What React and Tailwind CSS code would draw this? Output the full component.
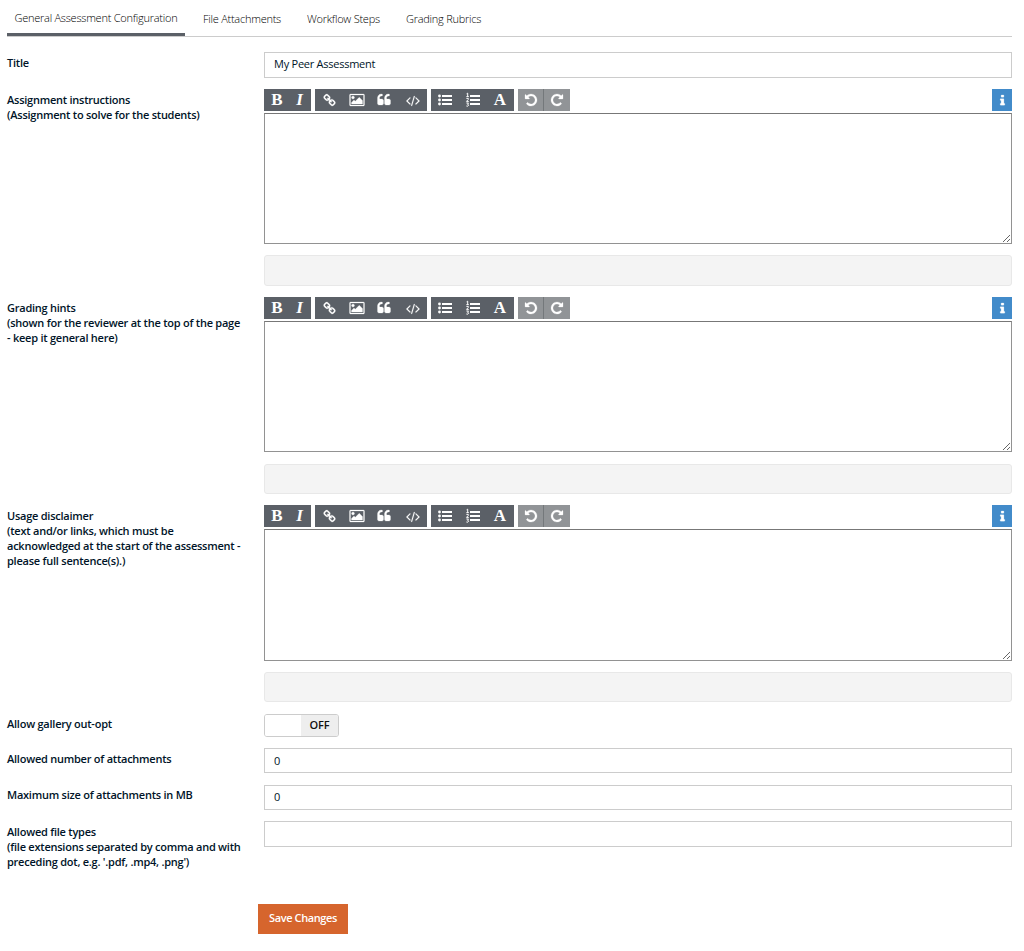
import React from "react";

const LINK =
  "M1520 1216q0-40-28-68l-208-208q-28-28-68-28-42 0-72 32 3 3 19 18.5t21.5 21.5 15 19 13 25.5 3.5 27.5q0 40-28 68t-68 28q-15 0-27.5-3.5t-25.5-13-19-15-21.5-21.5-18.5-19q-33 31-33 73 0 40 28 68l206 207q27 27 68 27 40 0 68-26l147-146q28-28 28-67zm-703-705q0-40-28-68l-206-207q-28-28-68-28-39 0-68 27l-147 146q-28 28-28 67 0 40 28 68l208 208q27 27 68 27 42 0 72-31-3-3-19-18.5t-21.5-21.5-15-19-13-25.5-3.5-27.5q0-40 28-68t68-28q15 0 27.5 3.5t25.5 13 19 15 21.5 21.5 18.5 19q33-31 33-73zm895 705q0 120-85 203l-147 146q-83 83-203 83-121 0-204-85l-206-207q-83-83-83-203 0-123 88-209l-88-88q-86 88-208 88-120 0-204-84l-208-208q-84-84-84-204t85-203l147-146q83-83 203-83 121 0 204 85l206 207q83 83 83 203 0 123-88 209l88 88q86-88 208-88 120 0 204 84l208 208q84 84 84 204z";
const PICTURE =
  "M576 576q0 80-56 136t-136 56-136-56-56-136 56-136 136-56 136 56 56 136zm1024 384v448h-1408v-192l320-320 160 160 512-512zm96-704h-1600q-13 0-22.5 9.5t-9.5 22.5v1216q0 13 9.5 22.5t22.5 9.5h1600q13 0 22.5-9.5t9.5-22.5v-1216q0-13-9.5-22.5t-22.5-9.5zm160 32v1216q0 66-47 113t-113 47h-1600q-66 0-113-47t-47-113v-1216q0-66 47-113t113-47h1600q66 0 113 47t47 113z";
const QUOTE =
  "M832 960v384q0 80-56 136t-136 56h-384q-80 0-136-56t-56-136v-704q0-104 40.5-198.5t109.5-163.5 163.5-109.5 198.5-40.5h64q26 0 45 19t19 45v128q0 26-19 45t-45 19h-64q-106 0-181 75t-75 181v32q0 40 28 68t68 28h224q80 0 136 56t56 136zm896 0v384q0 80-56 136t-136 56h-384q-80 0-136-56t-56-136v-704q0-104 40.5-198.5t109.5-163.5 163.5-109.5 198.5-40.5h64q26 0 45 19t19 45v128q0 26-19 45t-45 19h-64q-106 0-181 75t-75 181v32q0 40 28 68t68 28h224q80 0 136 56t56 136z";
const CODE =
  "M617 1399l-50 50q-10 10-23 10t-23-10l-466-466q-10-10-10-23t10-23l466-466q10-10 23-10t23 10l50 50q10 10 10 23t-10 23l-393 393 393 393q10 10 10 23t-10 23zm591-1067l-373 1291q-4 13-15.5 19.5t-23.5 2.5l-62-17q-13-4-19.5-15.5t-2.5-24.5l373-1291q4-13 15.5-19.5t23.5-2.5l62 17q13 4 19.5 15.5t2.5 24.5zm657 651l-466 466q-10 10-23 10t-23-10l-50-50q-10-10-10-23t10-23l393-393-393-393q-10-10-10-23t10-23l50-50q10-10 23-10t23 10l466 466q10 10 10 23t-10 23z";
const REDO =
  "M1664 256v448q0 26-19 45t-45 19h-448q-42 0-59-40-17-39 14-69l138-138q-148-137-349-137-104 0-198.5 40.5t-163.5 109.5-109.5 163.5-40.5 198.5 40.5 198.5 109.5 163.5 163.5 109.5 198.5 40.5q119 0 225-52t179-147q7-10 23-12 15 0 25 9l137 138q9 8 9.5 20.5t-7.5 22.5q-109 132-264 204.5t-327 72.5q-156 0-298-61t-245-164-164-245-61-298 61-298 164-245 245-164 298-61q147 0 284.5 55.5t244.5 156.5l130-129q29-31 70-14 39 17 39 59z";
const INFO =
  "M1216 1344v128q0 26-19 45t-45 19h-512q-26 0-45-19t-19-45v-128q0-26 19-45t45-19h64v-384h-64q-26 0-45-19t-19-45v-128q0-26 19-45t45-19h384q26 0 45 19t19 45v576h64q26 0 45 19t19 45zm-128-1152v192q0 26-19 45t-45 19h-256q-26 0-45-19t-19-45v-192q0-26 19-45t45-19h256q26 0 45 19t19 45z";

function Glyph({ d, className = "size-[14px]" }) {
  return (
    <svg viewBox="0 0 1792 1792" fill="currentColor" className={`overflow-visible ${className}`}>
      <path d={d} stroke="currentColor" strokeWidth="30" />
    </svg>
  );
}

function Bars() {
  return <path d="M4 2h10v2H4zM4 6h10v2H4zM4 10h10v2H4z" fill="currentColor" />;
}

function BulletList() {
  return (
    <svg viewBox="0 0 14 14" className="size-[14px]">
      <Bars />
      <g fill="currentColor">
        <circle cx="1.5" cy="3" r="1.4" />
        <circle cx="1.5" cy="7" r="1.4" />
        <circle cx="1.5" cy="11" r="1.4" />
      </g>
    </svg>
  );
}

function NumberList() {
  return (
    <svg viewBox="0 0 14 14" className="size-[14px] overflow-visible">
      <Bars />
      <path
        d="M.6.8 1.7.2v3.4M.4 3.6h2.4M.4 5.4h1.9v1L.5 8.4h2.3M.4 10h2.1l-1 1.3q1.2.1 1.1 1.1-.3 1.2-2.2.6"
        fill="none"
        stroke="currentColor"
        strokeWidth="1"
      />
    </svg>
  );
}

function Tool({ children, className = "w-7" }) {
  return <button className={`flex h-full items-center justify-center ${className}`}>{children}</button>;
}

const letter = "pb-[2px] font-['Liberation_Serif',serif] font-bold text-[17px] leading-none";

function Editor({ label, children, area = "h-[131px]", preview = "mt-[11px] h-[30px]" }) {
  return (
    <div className="flex h-[208px]">
      <Label>
        {label}
        <br />
        {children}
      </Label>
      <div className="flex w-[748px] flex-col">
        <div className="flex h-[22px] shrink-0 text-white">
          <div className="flex w-[47px] bg-[#5b6067]">
            <Tool className="w-[26px]"><span className={letter}>B</span></Tool>
            <Tool className="w-[19px]"><span className={`${letter} italic`}>I</span></Tool>
          </div>
          <div className="ml-1 flex w-[112px] bg-[#5b6067]">
            <Tool><Glyph d={LINK} className="size-[13px]" /></Tool>
            <Tool className="w-[27px]"><Glyph d={PICTURE} /></Tool>
            <Tool><Glyph d={QUOTE} /></Tool>
            <Tool><Glyph d={CODE} className="size-[13px]" /></Tool>
          </div>
          <div className="ml-1 flex w-[83px] bg-[#5b6067]">
            <Tool><BulletList /></Tool>
            <Tool><NumberList /></Tool>
            <Tool className="w-[26px]"><span className={letter}>A</span></Tool>
          </div>
          <div className="ml-1 flex w-[52px] bg-[#919497]">
            <Tool className="w-[26px] border-r border-[#74787b]">
              <Glyph d={REDO} className="size-[14px] -scale-x-100" />
            </Tool>
            <Tool className="w-[25px]"><Glyph d={REDO} /></Tool>
          </div>
          <button className="ml-auto flex w-5 items-center justify-center bg-[#428bca]">
            <Glyph d={INFO} className="size-[13px]" />
          </button>
        </div>
        <textarea className={`mt-0.5 block w-full shrink-0 resize border border-[#929292] border-t-[#777] bg-white outline-none ${area}`} />
        <div className={`w-full shrink-0 rounded-[3px] border border-[#e8e8e8] bg-[#f4f4f4] ${preview}`} />
      </div>
    </div>
  );
}

function Label({ children, className = "pt-[3px]" }) {
  return (
    <div className={`w-[257px] shrink-0 leading-[15px] font-semibold tracking-[-0.24px] whitespace-nowrap ${className}`}>
      {children}
    </div>
  );
}

function Field({ label, value, className, input, labelClass }) {
  return (
    <div className={`flex ${className}`}>
      <Label className={labelClass}>{label}</Label>
      <input
        defaultValue={value}
        className={`w-[748px] border border-[#ccc] bg-white px-[9px] tracking-[-0.25px] outline-none ${input}`}
      />
    </div>
  );
}

export default function App() {
  return (
    <div className="h-[951px] w-[1024px] overflow-hidden bg-white pl-[7px] font-['Open_Sans',sans-serif] text-[11px] text-[#001428]">
      <nav className="flex h-[37px] w-[1005px] border-b border-[#ccc] text-[11px] leading-[18px] font-light tracking-[-0.25px] whitespace-nowrap text-black">
        <a className="h-[36px] w-[178px] border-b-[3px] border-[#5b6067] pt-[9px] pl-[7.5px]">
          General Assessment Configuration
        </a>
        <a className="ml-[18px] w-[104px] pt-[10px]">File Attachments</a>
        <a className="w-[99px] pt-[10px]">Workflow Steps</a>
        <a className="pt-[10px]">Grading Rubrics</a>
      </nav>
      <main>
        <Field label="Title" value="My Peer Assessment" className="mt-[15px] h-[37px]" input="h-[26px] pb-[3px]" />
        <Editor label="Assignment instructions" preview="mt-[11px] h-[31px]">(Assignment to solve for the students)</Editor>
        <Editor label="Grading hints" preview="mt-[12px] h-[30px]">
          (shown for the reviewer at the top of the page
          <br />- keep it general here)
        </Editor>
        <Editor label="Usage disclaimer" area="h-[132px]">
          (text and/or links, which must be
          <br />
          acknowledged at the start of the assessment -
          <br />
          please full sentence(s).)
        </Editor>
        <div className="mt-px flex h-[34px]">
          <Label className="pt-[2px]">Allow gallery out-opt</Label>
          <div className="flex h-[23px] w-[75px] overflow-hidden rounded-[3px] border border-[#ccc]">
            <div className="w-9 bg-white" />
            <div className="flex flex-1 items-center justify-center bg-[#eee] font-semibold tracking-[-0.1px] text-[#111]">OFF</div>
          </div>
        </div>
        <Field label="Allowed number of attachments" value="0" className="h-[37px]" input="h-[25px]" />
        <Field
          label="Maximum size of attachments in MB"
          value="0"
          className="h-[36px]"
          input="h-[25px] pb-[2px]"
          labelClass="pt-[2px]"
        />
        <Field
          label={<>Allowed file types<br />(file extensions separated by comma and with<br />preceding dot, e.g. '.pdf, .mp4, .png')</>}
          value=""
          className="h-[83px]"
          input="h-[26px]"
        />
        <button className="ml-[251px] block h-[30px] w-[90px] bg-[#d6652d] pb-[2px] font-semibold tracking-[-0.4px] text-white">
          Save Changes
        </button>
      </main>
    </div>
  );
}
